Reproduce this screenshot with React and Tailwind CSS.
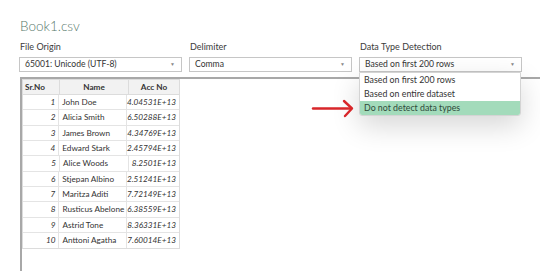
import React from 'react';

const rows = [
    [1, 'John Doe', '4.04531E+13'],
    [2, 'Alicia Smith', '6.50288E+13'],
    [3, 'James Brown', '4.34769E+13'],
    [4, 'Edward Stark', '2.45794E+13'],
    [5, 'Alice Woods', '8.2501E+13'],
    [6, 'Stjepan Albino', '2.51241E+13'],
    [7, 'Maritza Aditi', '7.72149E+13'],
    [8, 'Rusticus Abelone', '6.38559E+13'],
    [9, 'Astrid Tone', '8.36331E+13'],
    [10, 'Anttoni Agatha', '7.60014E+13'],
];

function Select({ label, value }) {
    return (
        <div className="w-[163px]">
            <div className="h-[16px] leading-[16px] text-[9px] text-[#3b3b3b] pl-[1px]">{label}</div>
            <div className="mt-[2px] h-[15px] border border-[#c6c6c6] flex items-center justify-between pl-[5px] pr-[6px] text-[8.6px] text-[#333]">
                <span className="leading-none">{value}</span>
                <span className="text-[5px] text-[#888] leading-none">▼</span>
            </div>
        </div>
    );
}

export default function App() {
    return (
        <div className="w-[540px] h-[271px] bg-white overflow-hidden relative" style={{ fontFamily: 'Lato, "Noto Sans", sans-serif' }}>
            <div className="pl-[20px] pt-[14px] h-[38px] leading-[24px] text-[13.5px] font-light text-[#56786a]">Book1.csv</div>
            <div className="flex gap-[7px] pl-[19px] mt-[1px]">
                <Select label="File Origin" value="65001: Unicode (UTF-8)" />
                <Select label="Delimiter" value="Comma" />
                <Select label="Data Type Detection" value="Based on first 200 rows" />
            </div>
            <div className="ml-[20px] mt-[5px] h-[200px] border-t-2 border-l-2 border-[#a8a8a8]">
                <div className="w-[158px] border border-[#dcdcdc] text-[8.2px] text-[#333]">
                    <div className="flex h-[15px] bg-[#f2f2f2] border-b border-[#dcdcdc] font-bold">
                        <div className="w-[37px] pl-[2px] border-r border-[#dcdcdc] flex items-center">Sr.No</div>
                        <div className="w-[69px] border-r border-[#dcdcdc] flex items-center justify-center">Name</div>
                        <div className="flex-1 flex items-center justify-center">Acc No</div>
                    </div>
                    {rows.map(([n, name, acc]) => (
                        <div key={n} className="flex h-[15.33px] border-b border-[#e4e4e4] last:border-b-0">
                            <div className="w-[37px] pr-[3px] border-r border-[#e4e4e4] flex items-center justify-end italic">{n}</div>
                            <div className="w-[69px] pl-[3px] border-r border-[#e4e4e4] flex items-center whitespace-nowrap">{name}</div>
                            <div className="flex-1 pr-[3px] flex items-center justify-end italic">{acc}</div>
                        </div>
                    ))}
                </div>
            </div>

            <div className="absolute left-[359px] top-[72px] w-[162px] bg-white border border-[#d4d4d4] rounded-b-[3px] shadow-[0_10px_28px_rgba(0,0,0,0.16)] text-[8.8px] text-[#333]">
                <div className="h-[14px] flex items-center pl-[4px]">Based on first 200 rows</div>
                <div className="h-[14px] flex items-center pl-[4px]">Based on entire dataset</div>
                <div className="h-[14px] flex items-center pl-[4px] bg-[#a3dbbb] rounded-b-[2px] text-[#2e4a3a]">Do not detect data types</div>
            </div>

            <svg className="absolute left-[311px] top-[99px]" width="44" height="19" viewBox="0 0 44 19">
                <path d="M2 9.5 H40" stroke="#d8262a" strokeWidth="2.4" strokeLinecap="round" fill="none" />
                <path d="M33 2 L41 9.5 L34 17" stroke="#d8262a" strokeWidth="2.4" strokeLinecap="round" strokeLinejoin="round" fill="none" />
            </svg>
        </div>
    );
}
